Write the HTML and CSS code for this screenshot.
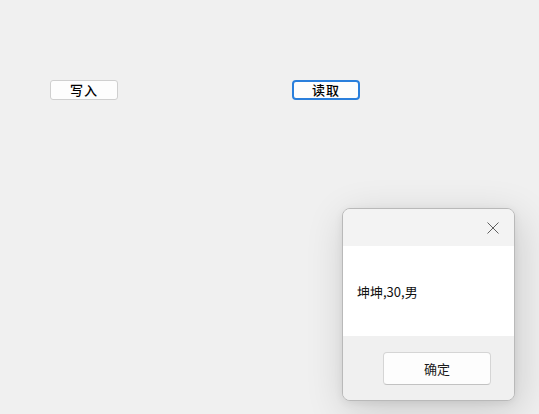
FILE: index.html
```html
<!DOCTYPE html>
<html>
<head>
<meta charset="utf-8">
<link rel="stylesheet" href="styles.css">
</head>
<body>
<div class="main">
  <div class="toolbar">
    <button class="btn">写入</button>
    <button class="btn focused">读取</button>
  </div>
</div>
<div class="dialog">
  <div class="titlebar">
    <svg class="close" width="12" height="12" viewBox="0 0 12 12">
      <path d="M0.5 0.5 L11.5 11.5 M11.5 0.5 L0.5 11.5" stroke="#5f5f5f" stroke-width="1" fill="none"/>
    </svg>
  </div>
  <div class="body">坤坤,30,男</div>
  <div class="footer">
    <button class="ok">确定</button>
  </div>
</div>
</body>
</html>
```

FILE: styles.css
```css
html, body {
  margin: 0;
  padding: 0;
  width: 539px;
  height: 414px;
  overflow: hidden;
  background: #f0f0f0;
  font-family: "Noto Sans CJK SC", "Microsoft YaHei", sans-serif;
}
.main {
  width: 539px;
  height: 414px;
}
.toolbar {
  display: flex;
  gap: 174px;
  padding: 80px 0 0 50px;
}
.btn {
  width: 68px;
  height: 20px;
  box-sizing: border-box;
  border: 1px solid #cfcfcf;
  border-radius: 3px;
  background: #fdfdfd;
  font-family: "Noto Sans CJK SC", sans-serif;
  font-size: 13px;
  font-weight: 500;
  line-height: 16px;
  color: #000;
  padding: 0;
  letter-spacing: 1px;
}
.btn.focused {
  border: 2px solid #2a7fdc;
  border-radius: 4px;
  line-height: 14px;
}
.dialog {
  position: absolute;
  left: 342px;
  top: 208px;
  width: 173px;
  height: 193px;
  box-sizing: border-box;
  border: 1px solid #b9b9b9;
  border-radius: 8px;
  background: #f0f0f0;
  overflow: hidden;
  display: flex;
  flex-direction: column;
  box-shadow: 4px 10px 40px rgba(0,0,0,0.16), 0 2px 8px rgba(0,0,0,0.07);
}
.titlebar {
  height: 37px;
  background: #f3f3f3;
  display: flex;
  justify-content: flex-end;
  align-items: center;
  padding-right: 15px;
}
.close {
  display: block;
  margin-top: 1px;
}
.body {
  height: 90px;
  background: #ffffff;
  display: flex;
  align-items: center;
  padding-left: 14px;
  font-size: 13px;
  color: #111;
}
.footer {
  flex: 1;
  background: #f0f0f0;
  display: flex;
  justify-content: flex-end;
  align-items: flex-start;
  padding: 16px 23px 0 0;
}
.ok {
  width: 108px;
  height: 33px;
  box-sizing: border-box;
  border: 1px solid #d5d5d5;
  border-bottom-color: #c2c2c2;
  border-radius: 4px;
  background: #fdfdfd;
  font-family: "Noto Sans CJK SC", sans-serif;
  font-size: 13px;
  color: #1a1a1a;
  padding: 0;
}
```
